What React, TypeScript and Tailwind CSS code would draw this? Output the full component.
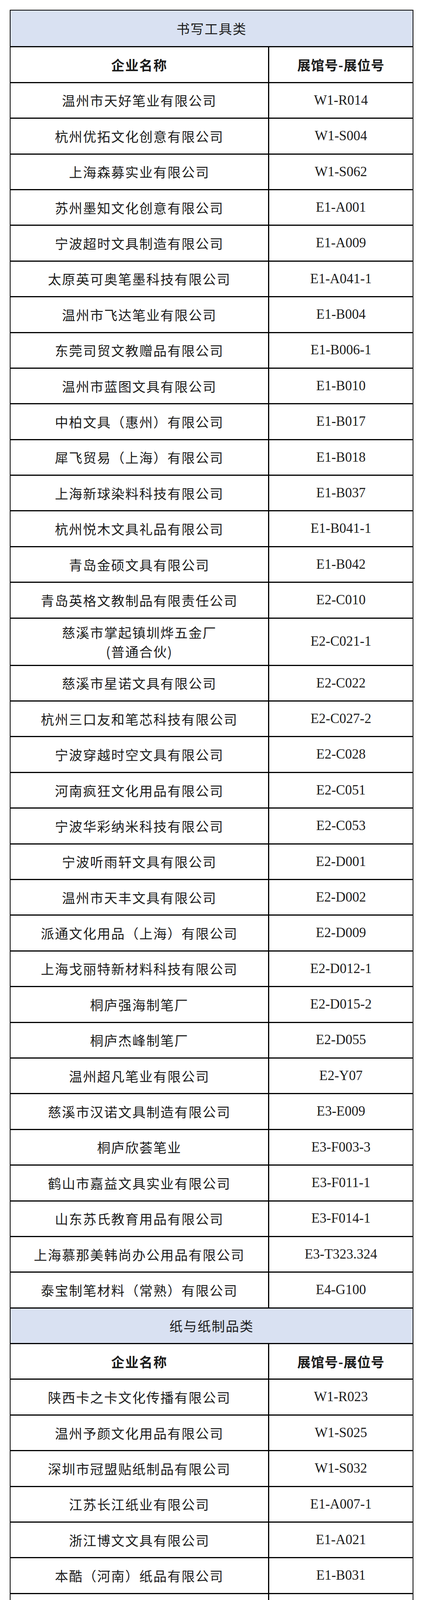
const writing: [string, string][] = [
  ["温州市天好笔业有限公司", "W1-R014"],
  ["杭州优拓文化创意有限公司", "W1-S004"],
  ["上海森募实业有限公司", "W1-S062"],
  ["苏州墨知文化创意有限公司", "E1-A001"],
  ["宁波超时文具制造有限公司", "E1-A009"],
  ["太原英可奥笔墨科技有限公司", "E1-A041-1"],
  ["温州市飞达笔业有限公司", "E1-B004"],
  ["东莞司贸文教赠品有限公司", "E1-B006-1"],
  ["温州市蓝图文具有限公司", "E1-B010"],
  ["中柏文具（惠州）有限公司", "E1-B017"],
  ["犀飞贸易（上海）有限公司", "E1-B018"],
  ["上海新球染料科技有限公司", "E1-B037"],
  ["杭州悦木文具礼品有限公司", "E1-B041-1"],
  ["青岛金硕文具有限公司", "E1-B042"],
  ["青岛英格文教制品有限责任公司", "E2-C010"],
  ["慈溪市掌起镇圳烨五金厂\n(普通合伙)", "E2-C021-1"],
  ["慈溪市星诺文具有限公司", "E2-C022"],
  ["杭州三口友和笔芯科技有限公司", "E2-C027-2"],
  ["宁波穿越时空文具有限公司", "E2-C028"],
  ["河南疯狂文化用品有限公司", "E2-C051"],
  ["宁波华彩纳米科技有限公司", "E2-C053"],
  ["宁波听雨轩文具有限公司", "E2-D001"],
  ["温州市天丰文具有限公司", "E2-D002"],
  ["派通文化用品（上海）有限公司", "E2-D009"],
  ["上海戈丽特新材料科技有限公司", "E2-D012-1"],
  ["桐庐强海制笔厂", "E2-D015-2"],
  ["桐庐杰峰制笔厂", "E2-D055"],
  ["温州超凡笔业有限公司", "E2-Y07"],
  ["慈溪市汉诺文具制造有限公司", "E3-E009"],
  ["桐庐欣荟笔业", "E3-F003-3"],
  ["鹤山市嘉益文具实业有限公司", "E3-F011-1"],
  ["山东苏氏教育用品有限公司", "E3-F014-1"],
  ["上海慕那美韩尚办公用品有限公司", "E3-T323.324"],
  ["泰宝制笔材料（常熟）有限公司", "E4-G100"],
];

const paper: [string, string][] = [
  ["陕西卡之卡文化传播有限公司", "W1-R023"],
  ["温州予颜文化用品有限公司", "W1-S025"],
  ["深圳市冠盟贴纸制品有限公司", "W1-S032"],
  ["江苏长江纸业有限公司", "E1-A007-1"],
  ["浙江博文文具有限公司", "E1-A021"],
  ["本酷（河南）纸品有限公司", "E1-B031"],
  ["平乡县泰宁文化用品厂", "E2-C011"],
  ["湖北双佳纸品有限公司", "E2-C024"],
  ["浙江泰迪纸业科技有限公司", "E2-D012"],
  ["金华市福臣纸品有限公司", "E2-D021"],
  ["陕西创凡纸制品有限公司", "E2-Y06"],
  ["辛集市明宇印刷厂", "E3-E003-2"],
  ["义乌市嘉懿纸制品有限公司", "E3-E019"],
  ["上海邢韵文具有限公司", "E3-E029"],
  ["辛集市润锋纸制品有限公司", "E3-E037"],
  ["义乌市铭墨包装制品有限公司", "E3-F018-2"],
  ["焦作市汉章纸制品有限公司", "E3-F019"],
  ["河南省新乡市优佳纸制品有限公司", "E3-F019-1"],
  ["徐州中坚物资贸易有限公司", "E3-F024"],
  ["夹江县汉唐纸业有限责任公司", "E3-F026"],
  ["上海美吾文化传播有限公司", "E3-T717"],
  ["株式会社 因州屋", "E4-G003-2"],
  ["义乌市万业鸣扬纸制品有限公司", "E4-G011-3"],
  ["抚顺市腾飞塑料泡沫厂", "E4-G017"],
  ["江苏骏飞新材料科技有限公司", "E4-G022-1"],
  ["临沂市中盛纸业有限公司", "E4-H010-1"],
  ["福州茜素数码科技有限公司", "E4-H020"],
];

const cjk = "font-['Noto_Sans_CJK_SC',sans-serif]";

function Section({ title, rows, first }: { title: string; rows: [string, string][]; first?: boolean }) {
  return (
    <>
      {/* category band */}
      <div
        className={`h-[91.4px] flex items-center justify-center bg-[#d9e1f2] text-[34px] tracking-[2px] ${cjk} ${
          first ? "" : "border-t-[3px] border-black"
        }`}
      >
        {title}
      </div>
      <div className="h-[91.4px] flex border-t-[3px] border-black">
        <div className={`w-[662px] border-r-[3px] border-black flex items-center justify-center text-[34px] tracking-[2px] font-bold ${cjk}`}>
          企业名称
        </div>
        <div className={`flex-1 flex items-center justify-center text-[34px] tracking-[1px] font-bold ${cjk}`}>
          展馆号-展位号
        </div>
      </div>
      {rows.map(([name, code]) => {
        const lines = name.split("\n");
        return (
          <div
            key={code}
            className={`flex border-t-[3px] border-black ${lines.length > 1 ? "h-[121px]" : "h-[91.4px]"}`}
          >
            <div className={`w-[662px] border-r-[3px] border-black flex flex-col items-center justify-center text-[34px] leading-[49px] tracking-[2px] ${cjk}`}>
              {lines.map((l) => (
                <span key={l}>{l}</span>
              ))}
            </div>
            <div className="flex-1 flex items-center justify-center text-[35px] font-['Liberation_Serif',serif]">
              {code}
            </div>
          </div>
        );
      })}
    </>
  );
}

export default function App() {
  return (
    <div className="bg-white min-h-[6018px] pt-[25px] pl-[25px] text-[#1c1c1c]">
      <div className="w-[1033px] border-2 border-black flex flex-col">
        <Section title="书写工具类" rows={writing} first />
        <Section title="纸与纸制品类" rows={paper} />
      </div>
    </div>
  );
}
